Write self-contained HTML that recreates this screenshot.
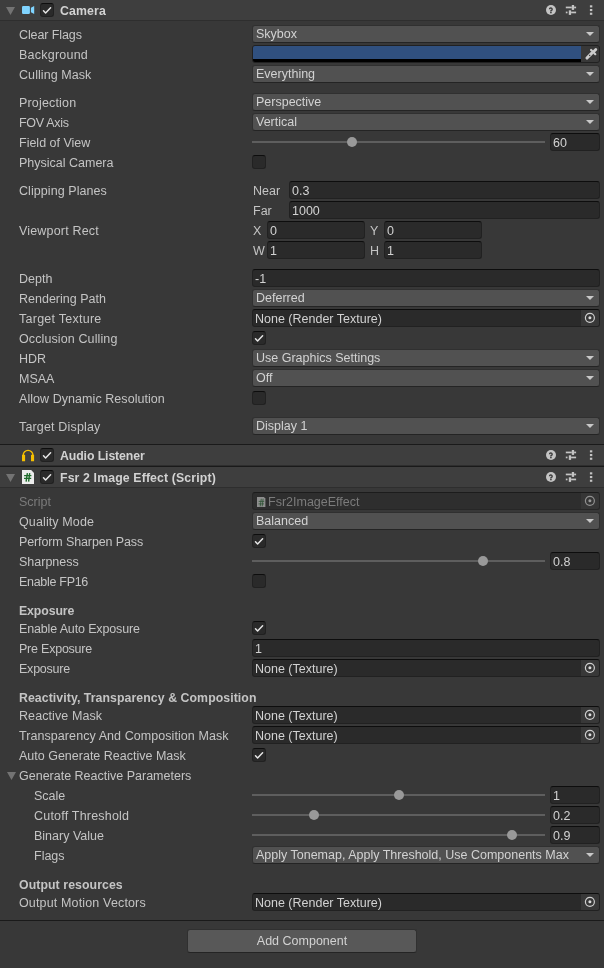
<!DOCTYPE html><html><head><meta charset="utf-8"><style>
*{margin:0;padding:0;box-sizing:border-box}
html,body{width:604px;height:968px;overflow:hidden;background:#383838}
body{position:relative;-webkit-font-smoothing:antialiased;font-family:"Liberation Sans",sans-serif;font-size:12.5px}
div,svg{position:absolute}
svg{will-change:transform}
.t,.tb,.ddt,.tft,.oft,.bt{will-change:transform}
.t,.tb{white-space:nowrap;line-height:14px;color:#c4c4c4}
.tb{font-weight:bold;font-size:12.3px}
.hdt{color:#d2d2d2}
.dis{color:#7b7b7b}
.hdr{left:0;width:604px;height:20px;background:#3e3e3e}
.sep{left:0;width:604px;height:1px;background:#1a1a1a}
.sep2{left:0;width:604px;height:1px;background:#2e2e2e}
.fold{width:0;height:0;border-left:4.5px solid transparent;border-right:4.5px solid transparent;border-top:8px solid #808080}
.dd{height:18px;background:#515151;border:1px solid #303030;border-bottom-color:#242424;border-radius:3px}
.ddt{left:3px;top:1px;line-height:14px;color:#d2d2d2;white-space:nowrap}
.arr{right:5px;top:6px;width:0;height:0;border-left:4px solid transparent;border-right:4px solid transparent;border-top:4.5px solid #c8c8c8}
.tf{height:18px;background:#2a2a2a;border:1px solid #212121;border-top-color:#0d0d0d;border-radius:3px}
.tft{left:2px;top:2px;line-height:14px;color:#d2d2d2;white-space:nowrap}
.of{height:18px;background:#2a2a2a;border:1px solid #212121;border-top-color:#0d0d0d;border-radius:3px;overflow:hidden}
.oft{left:2px;top:2px;line-height:14px;color:#d2d2d2;white-space:nowrap}
.ob{right:0;top:0;width:18px;height:16px;background:#383838}
.ob svg{left:0;top:0}
.ring{left:3.5px;top:2.5px;width:11px;height:11px;border:1.3px solid #c4c4c4;border-radius:50%}
.dot{left:7.2px;top:6.2px;width:3.6px;height:3.6px;background:#c4c4c4;border-radius:50%}
.dis2 .oft{color:#7b7b7b}
.dis2{background:#2e2e2e;border-color:#272727;border-top-color:#1c1c1c}
.dis2 .ob{background:#363636}
.dis2 .ob svg{opacity:.6}
.dis2 > svg{opacity:.5}
.cb{width:14px;height:14px;background:#2a2a2a;border:1px solid #212121;border-top-color:#0d0d0d;border-radius:3px}
.cb svg{left:-1px;top:-1px}
.trk{height:2px;background:#5e5e5e}
.thumb{width:10px;height:10px;border-radius:50%;background:#999999}
.col{height:18px;background:#2a2a2a;border:1px solid #212121;border-radius:3px;overflow:hidden}
.colc{left:0;top:0;width:328px;height:13px;background:#30507f}
.colb{left:0;top:13px;width:328px;height:3px;background:#000}
.pick{right:0;top:0;width:18px;height:16px;background:#383838}
.pick svg{left:0;top:0}
.btn{background:#585858;border:1px solid #303030;border-bottom-color:#242424;border-radius:3px}
.bt{left:0;width:100%;text-align:center;top:4px;line-height:14px;color:#d2d2d2;white-space:nowrap}
.hic{position:absolute}
</style></head><body>
<div class="hdr" style="top:0px"></div><div class="sep2" style="top:20px"></div>
<svg style="left:5px;top:6px" width="11" height="10"><path d="M1 1 H10 L5.5 9 Z" fill="#737373"/></svg>
<svg style="position:absolute;left:22px;top:5px" width="13" height="10" viewBox="0 0 13 10"><rect x="0" y="1" width="7.9" height="7.9" rx="1.2" fill="#80d4ff"/><path d="M8.9 2.7 L12.2 1 V9 L8.9 7.3 Z" fill="#80d4ff"/></svg>
<div class="cb hcb" style="left:40px;top:3px"><svg width="14" height="14" viewBox="0 0 14 14"><path d="M3.5 7.7 L5.6 9.9 L10.6 4.7" fill="none" stroke="#e6e6e6" stroke-width="1.5" stroke-linecap="round" stroke-linejoin="round"/></svg></div>
<div class="tb hdt" style="left:60px;top:4px;letter-spacing:0.15px">Camera</div>
<svg class="hic" style="left:540px;top:0px" width="64" height="20" viewBox="0 0 64 20"><circle cx="11" cy="10" r="5" fill="#c4c4c4"/><path d="M9.6 9.3 A1.25 1.25 0 1 1 11.7 10.2 L10.9 10.9 V11.4" fill="none" stroke="#3e3e3e" stroke-width="1.5"/><rect x="10.1" y="11.9" width="1.6" height="1.4" fill="#3e3e3e"/><rect x="25.8" y="6.6" width="6" height="1.7" fill="#c4c4c4"/><rect x="31.8" y="5" width="2.3" height="4.9" fill="#c4c4c4"/><rect x="34.1" y="6.6" width="2" height="1.7" fill="#c4c4c4"/><rect x="25.8" y="11.6" width="1.7" height="1.7" fill="#c4c4c4"/><rect x="28.8" y="10.3" width="2.3" height="4.6" fill="#c4c4c4"/><rect x="31.1" y="11.6" width="5" height="1.7" fill="#c4c4c4"/><rect x="49.9" y="5.3" width="2.4" height="2.1" fill="#c4c4c4"/><rect x="49.9" y="9" width="2.4" height="2.1" fill="#c4c4c4"/><rect x="49.9" y="12.7" width="2.4" height="2.1" fill="#c4c4c4"/></svg>
<div class="t" style="left:19px;top:28px;letter-spacing:-0.1px">Clear Flags</div>
<div class="dd" style="left:252px;top:25px;width:348px"><div class="ddt">Skybox</div><div class="arr"></div></div>
<div class="t" style="left:19px;top:48px;letter-spacing:0.233px">Background</div>
<div class="col" style="left:252px;top:45px;width:348px"><div class="colc"></div><div class="colb"></div><div class="pick"><svg width="18" height="16" viewBox="0 0 18 16"><path d="M6.0 12.0 L10.6 7.4" stroke="#cccccc" stroke-width="3.1" stroke-linecap="round" fill="none"/><path d="M8.2 9.8 L9.2 8.8" stroke="#3a3a3a" stroke-width="1.1" fill="none"/><path d="M10.1 4.0 L14.3 8.2" stroke="#cccccc" stroke-width="2.2" stroke-linecap="round" fill="none"/><path d="M12.8 5.4 L14.8 3.4" stroke="#cccccc" stroke-width="2.8" stroke-linecap="round" fill="none"/></svg></div></div>
<div class="t" style="left:19px;top:68px;letter-spacing:0.073px">Culling Mask</div>
<div class="dd" style="left:252px;top:65px;width:348px"><div class="ddt">Everything</div><div class="arr"></div></div>
<div class="t" style="left:19px;top:96px;letter-spacing:0.167px">Projection</div>
<div class="dd" style="left:252px;top:93px;width:348px"><div class="ddt">Perspective</div><div class="arr"></div></div>
<div class="t" style="left:19px;top:116px;letter-spacing:-0.314px">FOV Axis</div>
<div class="dd" style="left:252px;top:113px;width:348px"><div class="ddt">Vertical</div><div class="arr"></div></div>
<div class="t" style="left:19px;top:136px;">Field of View</div>
<div class="trk" style="left:252px;top:141px;width:293px"></div>
<div class="thumb" style="left:347px;top:137px"></div>
<div class="tf" style="left:550px;top:133px;width:50px"><div class="tft">60</div></div>
<div class="t" style="left:19px;top:156px;">Physical Camera</div>
<div class="cb" style="left:252px;top:155px"></div>
<div class="t" style="left:19px;top:184px;letter-spacing:0.071px">Clipping Planes</div>
<div class="t" style="left:253px;top:184px;">Near</div>
<div class="tf" style="left:289px;top:181px;width:311px"><div class="tft">0.3</div></div>
<div class="t" style="left:253px;top:204px;">Far</div>
<div class="tf" style="left:289px;top:201px;width:311px"><div class="tft">1000</div></div>
<div class="t" style="left:19px;top:224px;letter-spacing:0.175px">Viewport Rect</div>
<div class="t" style="left:253px;top:224px;">X</div>
<div class="tf" style="left:267px;top:221px;width:98px"><div class="tft">0</div></div>
<div class="t" style="left:370px;top:224px;">Y</div>
<div class="tf" style="left:384px;top:221px;width:98px"><div class="tft">0</div></div>
<div class="t" style="left:253px;top:244px;">W</div>
<div class="tf" style="left:267px;top:241px;width:98px"><div class="tft">1</div></div>
<div class="t" style="left:370px;top:244px;">H</div>
<div class="tf" style="left:384px;top:241px;width:98px"><div class="tft">1</div></div>
<div class="t" style="left:19px;top:272px;">Depth</div>
<div class="tf" style="left:252px;top:269px;width:348px"><div class="tft">-1</div></div>
<div class="t" style="left:19px;top:292px;">Rendering Path</div>
<div class="dd" style="left:252px;top:289px;width:348px"><div class="ddt">Deferred</div><div class="arr"></div></div>
<div class="t" style="left:19px;top:312px;letter-spacing:0.254px">Target Texture</div>
<div class="of" style="left:252px;top:309px;width:348px"><div class="oft">None (Render Texture)</div><div class="ob"><svg width="18" height="16"><circle cx="8.9" cy="7.8" r="4.5" fill="none" stroke="#cfcfcf" stroke-width="1.2"/><circle cx="8.9" cy="7.8" r="1.5" fill="#dcdcdc"/></svg></div></div>
<div class="t" style="left:19px;top:332px;letter-spacing:0.112px">Occlusion Culling</div>
<div class="cb" style="left:252px;top:331px"><svg width="14" height="14" viewBox="0 0 14 14"><path d="M3.5 7.7 L5.6 9.9 L10.6 4.7" fill="none" stroke="#e6e6e6" stroke-width="1.5" stroke-linecap="round" stroke-linejoin="round"/></svg></div>
<div class="t" style="left:19px;top:352px;">HDR</div>
<div class="dd" style="left:252px;top:349px;width:348px"><div class="ddt">Use Graphics Settings</div><div class="arr"></div></div>
<div class="t" style="left:19px;top:372px;">MSAA</div>
<div class="dd" style="left:252px;top:369px;width:348px"><div class="ddt">Off</div><div class="arr"></div></div>
<div class="t" style="left:19px;top:392px;letter-spacing:0.057px">Allow Dynamic Resolution</div>
<div class="cb" style="left:252px;top:391px"></div>
<div class="t" style="left:19px;top:420px;letter-spacing:0.162px">Target Display</div>
<div class="dd" style="left:252px;top:417px;width:348px"><div class="ddt">Display 1</div><div class="arr"></div></div>
<div class="sep" style="top:444px"></div>
<div class="hdr" style="top:445px"></div><div class="sep2" style="top:465px"></div>
<svg style="position:absolute;left:22px;top:448px" width="13" height="14" viewBox="0 0 13 14"><path d="M1.2 7.2 A4.85 4.85 0 0 1 10.9 7.2" fill="none" stroke="#f5bf00" stroke-width="1.4"/><rect x="0" y="6.7" width="3.1" height="6.6" rx="0.4" fill="#f5bf00"/><rect x="9" y="6.7" width="3.1" height="6.6" rx="0.4" fill="#f5bf00"/></svg>
<div class="cb hcb" style="left:40px;top:448px"><svg width="14" height="14" viewBox="0 0 14 14"><path d="M3.5 7.7 L5.6 9.9 L10.6 4.7" fill="none" stroke="#e6e6e6" stroke-width="1.5" stroke-linecap="round" stroke-linejoin="round"/></svg></div>
<div class="tb hdt" style="left:60px;top:449px;letter-spacing:-0.1px">Audio Listener</div>
<svg class="hic" style="left:540px;top:445px" width="64" height="20" viewBox="0 0 64 20"><circle cx="11" cy="10" r="5" fill="#c4c4c4"/><path d="M9.6 9.3 A1.25 1.25 0 1 1 11.7 10.2 L10.9 10.9 V11.4" fill="none" stroke="#3e3e3e" stroke-width="1.5"/><rect x="10.1" y="11.9" width="1.6" height="1.4" fill="#3e3e3e"/><rect x="25.8" y="6.6" width="6" height="1.7" fill="#c4c4c4"/><rect x="31.8" y="5" width="2.3" height="4.9" fill="#c4c4c4"/><rect x="34.1" y="6.6" width="2" height="1.7" fill="#c4c4c4"/><rect x="25.8" y="11.6" width="1.7" height="1.7" fill="#c4c4c4"/><rect x="28.8" y="10.3" width="2.3" height="4.6" fill="#c4c4c4"/><rect x="31.1" y="11.6" width="5" height="1.7" fill="#c4c4c4"/><rect x="49.9" y="5.3" width="2.4" height="2.1" fill="#c4c4c4"/><rect x="49.9" y="9" width="2.4" height="2.1" fill="#c4c4c4"/><rect x="49.9" y="12.7" width="2.4" height="2.1" fill="#c4c4c4"/></svg>
<div class="sep" style="top:466px"></div>
<div class="hdr" style="top:467px"></div><div class="sep2" style="top:487px"></div>
<svg style="left:5px;top:473px" width="11" height="10"><path d="M1 1 H10 L5.5 9 Z" fill="#737373"/></svg>
<svg style="position:absolute;left:22px;top:470px" width="12" height="14" viewBox="0 0 12 14"><path d="M0 0 H9.2 L12 3 V14 H0 Z" fill="#ececec"/><path d="M5.4 3.1 L4.1 11.7 M7.7 3.1 L6.6 11.7 M2.1 5.6 H9.4 M2 8.4 H9.2" stroke="#1d6b2a" stroke-width="1.4" fill="none"/></svg>
<div class="cb hcb" style="left:40px;top:470px"><svg width="14" height="14" viewBox="0 0 14 14"><path d="M3.5 7.7 L5.6 9.9 L10.6 4.7" fill="none" stroke="#e6e6e6" stroke-width="1.5" stroke-linecap="round" stroke-linejoin="round"/></svg></div>
<div class="tb hdt" style="left:60px;top:471px;letter-spacing:0.13px">Fsr 2 Image Effect (Script)</div>
<svg class="hic" style="left:540px;top:467px" width="64" height="20" viewBox="0 0 64 20"><circle cx="11" cy="10" r="5" fill="#c4c4c4"/><path d="M9.6 9.3 A1.25 1.25 0 1 1 11.7 10.2 L10.9 10.9 V11.4" fill="none" stroke="#3e3e3e" stroke-width="1.5"/><rect x="10.1" y="11.9" width="1.6" height="1.4" fill="#3e3e3e"/><rect x="25.8" y="6.6" width="6" height="1.7" fill="#c4c4c4"/><rect x="31.8" y="5" width="2.3" height="4.9" fill="#c4c4c4"/><rect x="34.1" y="6.6" width="2" height="1.7" fill="#c4c4c4"/><rect x="25.8" y="11.6" width="1.7" height="1.7" fill="#c4c4c4"/><rect x="28.8" y="10.3" width="2.3" height="4.6" fill="#c4c4c4"/><rect x="31.1" y="11.6" width="5" height="1.7" fill="#c4c4c4"/><rect x="49.9" y="5.3" width="2.4" height="2.1" fill="#c4c4c4"/><rect x="49.9" y="9" width="2.4" height="2.1" fill="#c4c4c4"/><rect x="49.9" y="12.7" width="2.4" height="2.1" fill="#c4c4c4"/></svg>
<div class="t dis" style="left:19px;top:495px;">Script</div>
<div class="of dis2" style="left:252px;top:492px;width:348px"><div class="oft" style="left:15px">Fsr2ImageEffect</div><div class="ob"><svg width="18" height="16"><circle cx="8.9" cy="7.8" r="4.5" fill="none" stroke="#cfcfcf" stroke-width="1.2"/><circle cx="8.9" cy="7.8" r="1.5" fill="#dcdcdc"/></svg></div><svg style="position:absolute;left:3.8px;top:4px" width="9" height="10" viewBox="0 0 9 10"><path d="M0 0 H6.9 L8.4 1.5 V10 H0 Z" fill="#eeeeee"/><path d="M4.3 1.8 L3.2 9.4 M6.1 1.8 L5.2 9.4 M1.7 4.4 H7.2 M1.5 6.9 H7.0" stroke="#2a7536" stroke-width="0.8" fill="none"/></svg></div>
<div class="t" style="left:19px;top:515px;letter-spacing:0.118px">Quality Mode</div>
<div class="dd" style="left:252px;top:512px;width:348px"><div class="ddt">Balanced</div><div class="arr"></div></div>
<div class="t" style="left:19px;top:535px;letter-spacing:-0.121px">Perform Sharpen Pass</div>
<div class="cb" style="left:252px;top:534px"><svg width="14" height="14" viewBox="0 0 14 14"><path d="M3.5 7.7 L5.6 9.9 L10.6 4.7" fill="none" stroke="#e6e6e6" stroke-width="1.5" stroke-linecap="round" stroke-linejoin="round"/></svg></div>
<div class="t" style="left:19px;top:555px;">Sharpness</div>
<div class="trk" style="left:252px;top:560px;width:293px"></div>
<div class="thumb" style="left:478px;top:556px"></div>
<div class="tf" style="left:550px;top:552px;width:50px"><div class="tft">0.8</div></div>
<div class="t" style="left:19px;top:575px;letter-spacing:-0.3px">Enable FP16</div>
<div class="cb" style="left:252px;top:574px"></div>
<div class="tb" style="left:19px;top:604px;letter-spacing:-0.1px">Exposure</div>
<div class="t" style="left:19px;top:622px;letter-spacing:-0.147px">Enable Auto Exposure</div>
<div class="cb" style="left:252px;top:621px"><svg width="14" height="14" viewBox="0 0 14 14"><path d="M3.5 7.7 L5.6 9.9 L10.6 4.7" fill="none" stroke="#e6e6e6" stroke-width="1.5" stroke-linecap="round" stroke-linejoin="round"/></svg></div>
<div class="t" style="left:19px;top:642px;letter-spacing:-0.227px">Pre Exposure</div>
<div class="tf" style="left:252px;top:639px;width:348px"><div class="tft">1</div></div>
<div class="t" style="left:19px;top:662px;letter-spacing:-0.229px">Exposure</div>
<div class="of" style="left:252px;top:659px;width:348px"><div class="oft">None (Texture)</div><div class="ob"><svg width="18" height="16"><circle cx="8.9" cy="7.8" r="4.5" fill="none" stroke="#cfcfcf" stroke-width="1.2"/><circle cx="8.9" cy="7.8" r="1.5" fill="#dcdcdc"/></svg></div></div>
<div class="tb" style="left:19px;top:691px;letter-spacing:0.07px">Reactivity, Transparency &amp; Composition</div>
<div class="t" style="left:19px;top:709px;letter-spacing:0.092px">Reactive Mask</div>
<div class="of" style="left:252px;top:706px;width:348px"><div class="oft">None (Texture)</div><div class="ob"><svg width="18" height="16"><circle cx="8.9" cy="7.8" r="4.5" fill="none" stroke="#cfcfcf" stroke-width="1.2"/><circle cx="8.9" cy="7.8" r="1.5" fill="#dcdcdc"/></svg></div></div>
<div class="t" style="left:19px;top:729px;letter-spacing:0.069px">Transparency And Composition Mask</div>
<div class="of" style="left:252px;top:726px;width:348px"><div class="oft">None (Texture)</div><div class="ob"><svg width="18" height="16"><circle cx="8.9" cy="7.8" r="4.5" fill="none" stroke="#cfcfcf" stroke-width="1.2"/><circle cx="8.9" cy="7.8" r="1.5" fill="#dcdcdc"/></svg></div></div>
<div class="t" style="left:19px;top:749px;">Auto Generate Reactive Mask</div>
<div class="cb" style="left:252px;top:748px"><svg width="14" height="14" viewBox="0 0 14 14"><path d="M3.5 7.7 L5.6 9.9 L10.6 4.7" fill="none" stroke="#e6e6e6" stroke-width="1.5" stroke-linecap="round" stroke-linejoin="round"/></svg></div>
<svg style="left:6px;top:772px" width="11" height="10"><path d="M1 0 H10 L5.5 8 Z" fill="#737373"/></svg>
<div class="t" style="left:19px;top:769px;">Generate Reactive Parameters</div>
<div class="t" style="left:34px;top:789px;">Scale</div>
<div class="trk" style="left:252px;top:794px;width:293px"></div>
<div class="thumb" style="left:394px;top:790px"></div>
<div class="tf" style="left:550px;top:786px;width:50px"><div class="tft">1</div></div>
<div class="t" style="left:34px;top:809px;letter-spacing:0.207px">Cutoff Threshold</div>
<div class="trk" style="left:252px;top:814px;width:293px"></div>
<div class="thumb" style="left:309px;top:810px"></div>
<div class="tf" style="left:550px;top:806px;width:50px"><div class="tft">0.2</div></div>
<div class="t" style="left:34px;top:829px;">Binary Value</div>
<div class="trk" style="left:252px;top:834px;width:293px"></div>
<div class="thumb" style="left:507px;top:830px"></div>
<div class="tf" style="left:550px;top:826px;width:50px"><div class="tft">0.9</div></div>
<div class="t" style="left:34px;top:849px;">Flags</div>
<div class="dd" style="left:252px;top:846px;width:348px"><div class="ddt">Apply Tonemap, Apply Threshold, Use Components Max</div><div class="arr"></div></div>
<div class="tb" style="left:19px;top:878px;letter-spacing:0.08px">Output resources</div>
<div class="t" style="left:19px;top:896px;letter-spacing:0.15px">Output Motion Vectors</div>
<div class="of" style="left:252px;top:893px;width:348px"><div class="oft">None (Render Texture)</div><div class="ob"><svg width="18" height="16"><circle cx="8.9" cy="7.8" r="4.5" fill="none" stroke="#cfcfcf" stroke-width="1.2"/><circle cx="8.9" cy="7.8" r="1.5" fill="#dcdcdc"/></svg></div></div>
<div class="sep" style="top:920px"></div>
<div class="btn" style="left:187px;top:929px;width:230px;height:24px"><div class="bt">Add Component</div></div>
</body></html>
